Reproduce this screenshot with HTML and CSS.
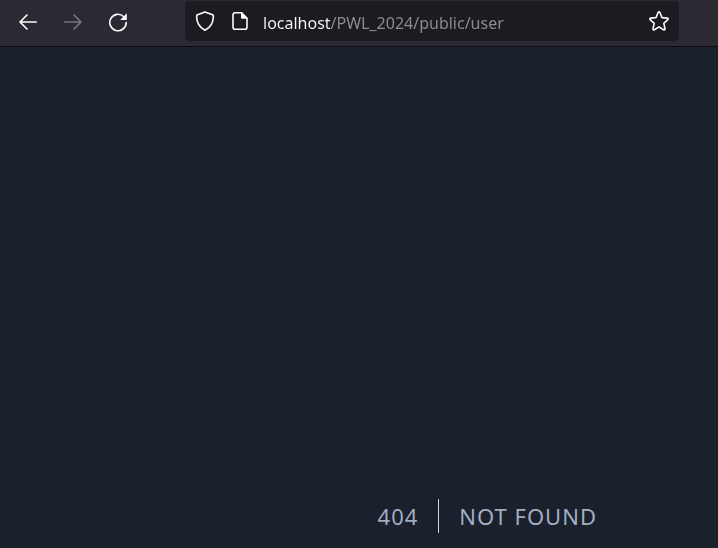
FILE: index.html
```html
<!DOCTYPE html>
<html lang="en">
<head>
<meta charset="utf-8">
<meta name="viewport" content="width=device-width, initial-scale=1">
<title>Not Found</title>
<link rel="stylesheet" href="styles.css">
</head>
<body>
<header class="toolbar">
  <nav class="nav" aria-label="Browser navigation">
    <button class="tool" type="button" aria-label="Back">
      <svg viewBox="0 0 20 20"><path d="M18.3 10H2.200M9 3 2 10l7 7"/></svg>
    </button>
    <button class="tool" type="button" aria-label="Forward" disabled>
      <svg viewBox="0 0 20 20"><path d="M1.700 10h16.100M11 3l7 7-7 7"/></svg>
    </button>
    <button class="tool" type="button" aria-label="Reload">
      <svg viewBox="0 0 20 20"><path d="M15.800 4.700A8.200 8.200 0 1 0 18.200 10.500"/><path class="solid" d="M18.800 1.300v6.300a.5.5 0 0 1-.5.5h-6.100z"/></svg>
    </button>
  </nav>
  <form class="urlbar">
    <button class="tool" type="button" aria-label="Tracking protection">
      <svg viewBox="0 0 20 20"><path d="M10 .9 17.500 3.800Q18.400 4.200 18.400 5.200C18.300 11.500 15.500 16.500 10 19.200 4.500 16.500 1.700 11.500 1.600 5.200Q1.600 4.200 2.500 3.800Z"/></svg>
    </button>
    <button class="tool" type="button" aria-label="Site information">
      <svg viewBox="0 0 20 20"><path d="M11.500 1.800H5A2 2 0 0 0 3 3.800V16.200a2 2 0 0 0 2 2H15a2 2 0 0 0 2-2V7.200z"/><path class="solid" d="M11 1.300h1l5.500 5.600v.8H12a1 1 0 0 1-1-1z"/></svg>
    </button>
    <input class="address" type="text" aria-label="Address" value="localhost/PWL_2024/public/user" spellcheck="false">
    <button class="tool" type="button" aria-label="Bookmark this page">
      <svg viewBox="0 0 20 20"><path d="M9.100 1.500Q10 .2 10.900 1.500L13 6.600 18.300 7.100Q19.800 7.500 18.800 8.700L14.800 12.300 16 17.700Q16 19.300 14.500 18.700L10 15.900 5.500 18.700Q4 19.300 4 17.700L5.200 12.300 1.200 8.700Q.2 7.500 1.700 7.100L7 6.600Z"/></svg>
    </button>
  </form>
</header>
<main class="page">
  <h1 class="error">
    <span class="code">404</span>
    <span class="message">Not Found</span>
  </h1>
</main>
</body>
</html>
```
FILE: styles.css
```css
* {
  box-sizing: border-box;
}

body {
  display: flex;
  flex-direction: column;
  min-height: 100vh;
  margin: 0;
  background: #1a202c;
  font-family: "Noto Sans", "Open Sans", sans-serif;
}

.toolbar {
  display: flex;
  align-items: flex-start;
  gap: 57px;
  padding: 1px 39px 3px 18px;
  background: #2b2a33;
  border-bottom: 1px solid #0c0c0d;
}

.nav {
  display: flex;
  align-items: center;
  gap: 25px;
  height: 42px;
}

.tool {
  flex: none;
  width: 20px;
  height: 20px;
  padding: 0;
  border: 0;
  background: none;
  color: #fbfbfe;
}

.tool:disabled {
  color: #77767c;
}

.tool svg {
  display: block;
  width: 20px;
  height: 20px;
  fill: none;
  stroke: currentColor;
  stroke-width: 1.6;
  stroke-linecap: round;
  stroke-linejoin: round;
}

.tool .solid {
  fill: currentColor;
  stroke: none;
}

.urlbar {
  display: flex;
  flex: 1;
  align-items: center;
  gap: 15px;
  min-width: 0;
  height: 40px;
  padding: 0 10px;
  border-radius: 5px;
  background: #1c1b22;
}

.address {
  flex: 1;
  min-width: 0;
  height: 40px;
  padding: 4px 0 0;
  margin-left: -2px;
  border: 0;
  outline: 0;
  background: linear-gradient(to right, #fbfbfe 68px, #8f8e94 68px);
  background-clip: text;
  -webkit-background-clip: text;
  color: transparent;
  font: 16px "Noto Sans", "Open Sans", sans-serif;
}

.page {
  display: flex;
  flex: 1;
  align-items: flex-end;
  justify-content: flex-end;
  padding: 0 121px 15px 20px;
}

.error {
  display: flex;
  align-items: center;
  margin: 0;
  color: #a0aec0;
  font-size: 22px;
  font-weight: 400;
  line-height: 34px;
  letter-spacing: 1px;
  text-transform: uppercase;
}

.code {
  padding-right: 20px;
  border-right: 1px solid #cbd5e0;
}

.message {
  padding-left: 20px;
}
```
